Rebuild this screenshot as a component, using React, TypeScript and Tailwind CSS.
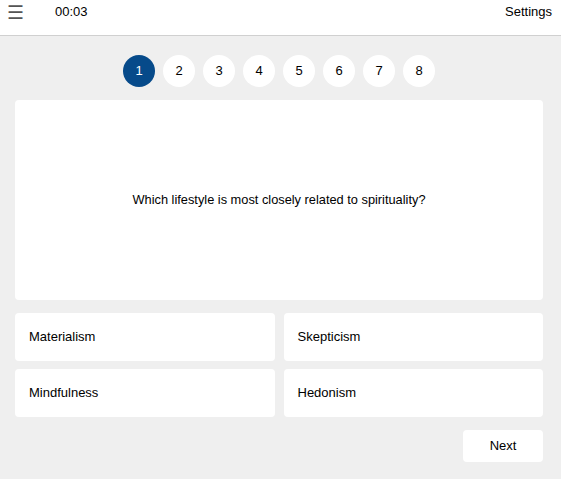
import React from "react"

const OPTIONS = ["Materialism", "Skepticism", "Mindfulness", "Hedonism"]

export default function App() {
  const steps = [1, 2, 3, 4, 5, 6, 7, 8]
  return (
    <div className="min-h-[479px] bg-[#efefef] text-[13px] text-black" style={{ fontFamily: '"Liberation Sans", Arial, sans-serif' }}>
      <header className="flex h-[36px] items-start border-b border-[#d0d0d0] bg-white pl-[7px] pr-[9px] pt-[3px]">
        <span className="text-[19px] leading-[20px] text-[#555]">☰</span>
        <span className="ml-[31px] pt-[1px] text-[13px] leading-[16px]">00:03</span>
        <span className="ml-auto pt-[1px] text-[13px] leading-[16px]">Settings</span>
      </header>

      <main className="pl-[15px] pr-[18px]">
        <div className="flex justify-center gap-[8px] pt-[19px] pb-[13px]">
          {steps.map((n) => (
            <div
              key={n}
              className={`flex h-[32px] w-[32px] items-center justify-center rounded-full text-[13px] ${
                n === 1 ? "bg-[#064a8a] text-white" : "bg-white text-black"
              }`}
            >
              {n}
            </div>
          ))}
        </div>

        <div className="flex h-[200px] items-center justify-center rounded-[4px] bg-white">
          <p className="text-[12.8px]">Which lifestyle is most closely related to spirituality?</p>
        </div>

        <div className="mt-[13px] grid grid-cols-2 gap-x-[9px] gap-y-[8px]">
          {OPTIONS.map((o) => (
            <div key={o} className="flex h-[48px] items-center rounded-[4px] bg-white px-[14px] pb-[1px]">
              {o}
            </div>
          ))}
        </div>

        <div className="flex justify-end pt-[13px]">
          <button className="h-[32px] w-[80px] rounded-[4px] bg-white text-[13px]">Next</button>
        </div>
      </main>
    </div>
  )
}
